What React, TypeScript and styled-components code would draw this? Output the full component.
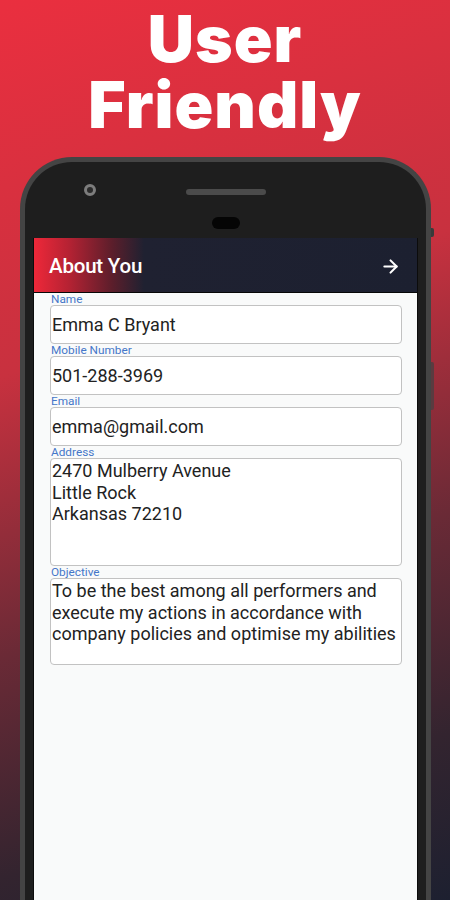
import React from "react";
import styled, { createGlobalStyle } from "styled-components";
import { ArrowRight } from "lucide-react";

const GlobalStyle = createGlobalStyle`
  html, body {
    margin: 0;
    padding: 0;
  }
  body {
    font-family: Roboto, "Liberation Sans", sans-serif;
  }
`;

const Page = styled.div`
  width: 450px;
  height: 900px;
  overflow: hidden;
  display: flex;
  flex-direction: column;
  background: linear-gradient(
    162deg,
    #ea2f3f 0%,
    #c8313f 36%,
    #6a2a36 63%,
    #33242f 84%,
    #1d2030 100%
  );
`;

const Title = styled.h1`
  margin: 0;
  padding-top: 6px;
  height: 151px;
  font-family: Inter, "Open Sans", sans-serif;
  font-weight: 900;
  font-size: 64px;
  line-height: 66px;
  letter-spacing: 1px;
  color: #fff;
  text-align: center;
`;

const Phone = styled.div`
  position: relative;
  flex: 1;
  display: flex;
  flex-direction: column;
  margin: 0 19px 0 20px;
  padding: 0 8px;
  background: #1e1e1e;
  border: 5px solid #444;
  border-bottom: none;
  border-radius: 52px 52px 0 0;

  &::before,
  &::after {
    content: "";
    position: absolute;
    right: -8px;
    width: 3px;
    background: #3a3a3a;
    border-radius: 0 2px 2px 0;
  }
  &::before {
    top: 66px;
    height: 9px;
  }
  &::after {
    top: 200px;
    height: 48px;
    background: #5a3b40;
  }
`;

const TopBezel = styled.div`
  height: 76px;
  display: grid;
  grid-template-columns: 1fr auto 1fr;
  grid-template-rows: 12px auto;
  row-gap: 21px;
  padding-top: 22px;
  box-sizing: border-box;
`;

const Camera = styled.div`
  grid-column: 1;
  grid-row: 1;
  justify-self: start;
  margin-left: 51px;
  width: 12px;
  height: 12px;
  box-sizing: border-box;
  border-radius: 50%;
  border: 3px solid #7d7d7d;
  background: #2b2b2b;
`;

const Speaker = styled.div`
  grid-column: 2;
  grid-row: 1;
  align-self: center;
  margin-top: 3px;
  width: 80px;
  height: 6px;
  border-radius: 3px;
  background: #4b4b4b;
`;

const Sensor = styled.div`
  grid-column: 2;
  grid-row: 2;
  justify-self: center;
  width: 28px;
  height: 12px;
  border-radius: 6px;
  background: #050505;
`;

const Screen = styled.div`
  flex: 1;
  display: flex;
  flex-direction: column;
  background: #f9fafa;
  border-left: 1px solid #0c0c0c;
  border-right: 1px solid #0c0c0c;
`;

const AppBar = styled.div`
  height: 55px;
  display: flex;
  align-items: center;
  justify-content: space-between;
  padding: 2px 16px 0 15px;
  box-sizing: border-box;
  background: linear-gradient(
    90deg,
    #ee2839 0px,
    #b52233 35px,
    #5c1e2b 78px,
    #1f2131 110px,
    #1c2030 100%
  );
  border-bottom: 1px solid #070707;
  color: #fff;
`;

const BarTitle = styled.span`
  font-family: Roboto, "Liberation Sans", sans-serif;
  font-weight: 500;
  font-size: 20.5px;
  letter-spacing: -0.2px;
`;

const Form = styled.div`
  display: flex;
  flex-direction: column;
  padding: 0 15px 0 16px;
`;

const Field = styled.div`
  display: flex;
  flex-direction: column;
`;

const Label = styled.span`
  height: 12px;
  padding-left: 1px;
  font-family: Roboto, "Liberation Sans", sans-serif;
  font-size: 11.8px;
  line-height: 12px;
  color: #4577c9;
`;

const Box = styled.div<{ $height: number; $multi?: boolean }>`
  height: ${({ $height }) => $height}px;
  box-sizing: border-box;
  padding: ${({ $multi }) => ($multi ? "1px 0 0 1px" : "8px 0 0 1px")};
  background: #fff;
  border: 1px solid #c2c2c2;
  border-radius: 4px;
  font-family: Roboto, "Liberation Sans", sans-serif;
  font-size: 18px;
  line-height: 21.5px;
  color: #222;
  white-space: pre-line;
`;

const fields = [
  { label: "Name", value: "Emma C Bryant", height: 39 },
  { label: "Mobile Number", value: "501-288-3969", height: 39 },
  { label: "Email", value: "emma@gmail.com", height: 39 },
  {
    label: "Address",
    value: "2470 Mulberry Avenue\nLittle Rock\nArkansas 72210",
    height: 108,
    multi: true,
  },
  {
    label: "Objective",
    value:
      "To be the best among all performers and\nexecute my actions in accordance with\ncompany policies and optimise my abilities",
    height: 87,
    multi: true,
  },
];

const App = () => {
  return (
    <>
      <GlobalStyle />
      <Page>
        <Title>
          User
          <br />
          Friendly
        </Title>
        <Phone>
          <TopBezel>
            <Camera />
            <Speaker />
            <Sensor />
          </TopBezel>
          <Screen>
            <AppBar>
              <BarTitle>About You</BarTitle>
              <ArrowRight size={21} strokeWidth={2.4} />
            </AppBar>
            <Form>
              {fields.map((f) => (
                <Field key={f.label}>
                  <Label>{f.label}</Label>
                  <Box $height={f.height} $multi={f.multi}>
                    {f.value}
                  </Box>
                </Field>
              ))}
            </Form>
          </Screen>
        </Phone>
      </Page>
    </>
  );
};

export default App;
